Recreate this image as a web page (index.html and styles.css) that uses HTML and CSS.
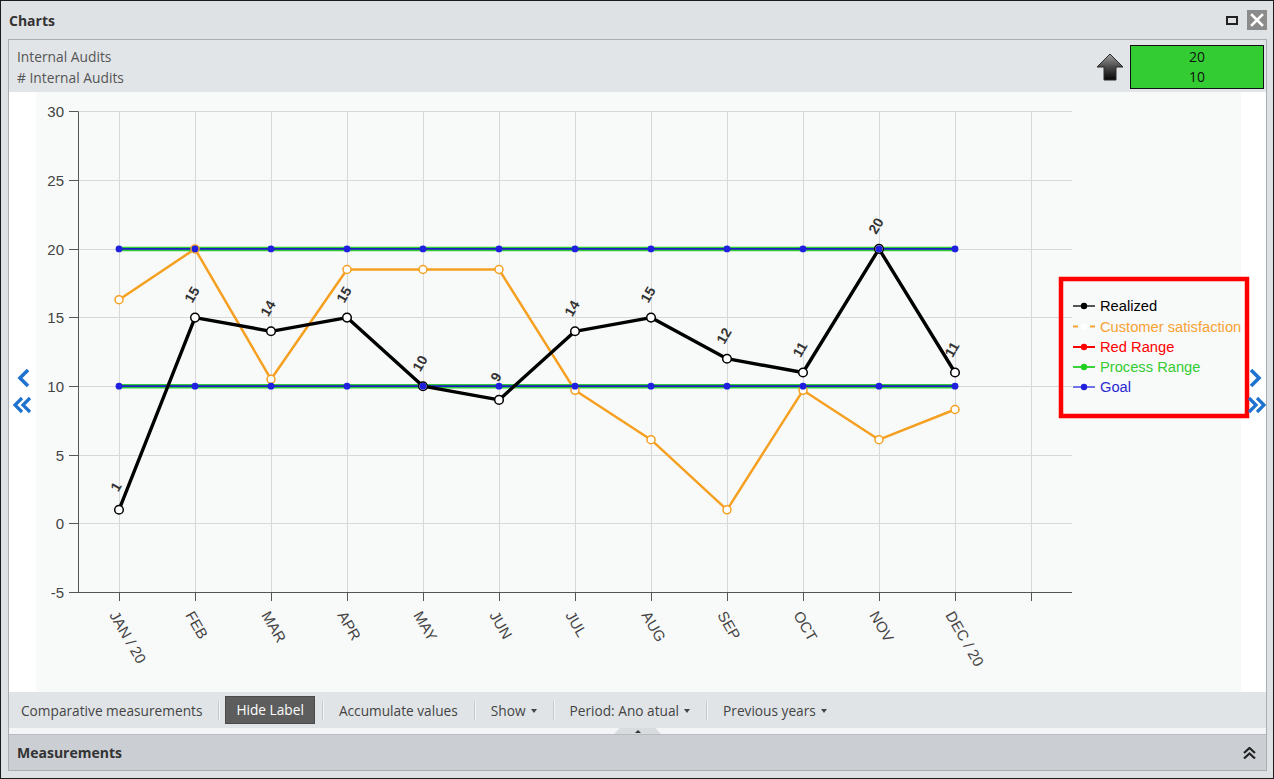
FILE: index.html
```html
<!DOCTYPE html>
<html>
<head>
<meta charset="utf-8">
<title>Charts</title>
<link rel="stylesheet" href="styles.css">
</head>
<body>
<div class="window">
  <div class="win-head">
    <span class="win-title">Charts</span>
    <div class="win-ctrls">
      <span class="restore"></span>
      <span class="close"><svg width="20" height="20" viewBox="0 0 20 20"><path d="M5 5 L15 15 M15 5 L5 15" stroke="#fff" stroke-width="2.6" stroke-linecap="square"/></svg></span>
    </div>
  </div>
  <div class="panel">
    <div class="info">
      <div class="info-text">
        <div>Internal Audits</div>
        <div># Internal Audits</div>
      </div>
      <div class="info-right">
        <svg class="trend" width="28" height="28" viewBox="0 0 28 28">
          <defs>
            <linearGradient id="ag" x1="0" y1="0" x2="0" y2="1">
              <stop offset="0" stop-color="#a0a0a0"/>
              <stop offset="0.5" stop-color="#4a4a4a"/>
              <stop offset="1" stop-color="#050505"/>
            </linearGradient>
          </defs>
          <polygon points="14,1 27,14 20,14 20,27 8,27 8,14 1,14" fill="url(#ag)" stroke="#2a2a2a" stroke-width="1"/>
        </svg>
        <div class="goal-box"><div>20</div><div>10</div></div>
      </div>
    </div>
    <div class="chart-area">
      <div class="nav">
        <svg class="nav-left" width="27" height="48" viewBox="0 0 27 48">
          <polyline points="19,2 11,10 19,18" fill="none" stroke="#1f73cf" stroke-width="3.6"/>
          <polyline points="13,30 6,37 13,44" fill="none" stroke="#1f73cf" stroke-width="3.2"/>
          <polyline points="21,30 14,37 21,44" fill="none" stroke="#1f73cf" stroke-width="3.2"/>
        </svg>
      </div>
      <div class="plot">
        <svg class="chart" width="1205" height="600" viewBox="36 92 1205 600">
          <g class="grid">
            <line x1="78" y1="111.5" x2="1072" y2="111.5"/>
            <line x1="78" y1="180.5" x2="1072" y2="180.5"/>
            <line x1="78" y1="249.5" x2="1072" y2="249.5"/>
            <line x1="78" y1="317.5" x2="1072" y2="317.5"/>
            <line x1="78" y1="386.5" x2="1072" y2="386.5"/>
            <line x1="78" y1="455.5" x2="1072" y2="455.5"/>
            <line x1="78" y1="523.5" x2="1072" y2="523.5"/>
            <line x1="119.5" y1="112" x2="119.5" y2="592"/>
            <line x1="195.5" y1="112" x2="195.5" y2="592"/>
            <line x1="271.5" y1="112" x2="271.5" y2="592"/>
            <line x1="347.5" y1="112" x2="347.5" y2="592"/>
            <line x1="423.5" y1="112" x2="423.5" y2="592"/>
            <line x1="499.5" y1="112" x2="499.5" y2="592"/>
            <line x1="575.5" y1="112" x2="575.5" y2="592"/>
            <line x1="651.5" y1="112" x2="651.5" y2="592"/>
            <line x1="727.5" y1="112" x2="727.5" y2="592"/>
            <line x1="803.5" y1="112" x2="803.5" y2="592"/>
            <line x1="879.5" y1="112" x2="879.5" y2="592"/>
            <line x1="955.5" y1="112" x2="955.5" y2="592"/>
            <line x1="1031.5" y1="112" x2="1031.5" y2="592"/>
          </g>
          <g class="axis">
            <line x1="78.5" y1="111.5" x2="78.5" y2="592.5"/>
            <line x1="78" y1="592.5" x2="1072" y2="592.5"/>
            <line x1="69" y1="111.5" x2="78" y2="111.5"/>
            <line x1="69" y1="180.5" x2="78" y2="180.5"/>
            <line x1="69" y1="249.5" x2="78" y2="249.5"/>
            <line x1="69" y1="317.5" x2="78" y2="317.5"/>
            <line x1="69" y1="386.5" x2="78" y2="386.5"/>
            <line x1="69" y1="455.5" x2="78" y2="455.5"/>
            <line x1="69" y1="523.5" x2="78" y2="523.5"/>
            <line x1="69" y1="592.5" x2="78" y2="592.5"/>
            <line x1="119.5" y1="592" x2="119.5" y2="601"/>
            <line x1="195.5" y1="592" x2="195.5" y2="601"/>
            <line x1="271.5" y1="592" x2="271.5" y2="601"/>
            <line x1="347.5" y1="592" x2="347.5" y2="601"/>
            <line x1="423.5" y1="592" x2="423.5" y2="601"/>
            <line x1="499.5" y1="592" x2="499.5" y2="601"/>
            <line x1="575.5" y1="592" x2="575.5" y2="601"/>
            <line x1="651.5" y1="592" x2="651.5" y2="601"/>
            <line x1="727.5" y1="592" x2="727.5" y2="601"/>
            <line x1="803.5" y1="592" x2="803.5" y2="601"/>
            <line x1="879.5" y1="592" x2="879.5" y2="601"/>
            <line x1="955.5" y1="592" x2="955.5" y2="601"/>
            <line x1="1031.5" y1="592" x2="1031.5" y2="601"/>
          </g>
          <g class="ylabels">
            <text x="64" y="116.5">30</text>
            <text x="64" y="185.5">25</text>
            <text x="64" y="254.5">20</text>
            <text x="64" y="322.5">15</text>
            <text x="64" y="391.5">10</text>
            <text x="64" y="460.5">5</text>
            <text x="64" y="528.5">0</text>
            <text x="64" y="597.5">-5</text>
          </g>
          <g class="xlabels">
            <text transform="translate(109,615) rotate(60)">JAN / 20</text>
            <text transform="translate(185,615) rotate(60)">FEB</text>
            <text transform="translate(261,615) rotate(60)">MAR</text>
            <text transform="translate(337,615) rotate(60)">APR</text>
            <text transform="translate(413,615) rotate(60)">MAY</text>
            <text transform="translate(489,615) rotate(60)">JUN</text>
            <text transform="translate(565,615) rotate(60)">JUL</text>
            <text transform="translate(641,615) rotate(60)">AUG</text>
            <text transform="translate(717,615) rotate(60)">SEP</text>
            <text transform="translate(793,615) rotate(60)">OCT</text>
            <text transform="translate(869,615) rotate(60)">NOV</text>
            <text transform="translate(945,615) rotate(60)">DEC / 20</text>
          </g>
          <polyline class="s-orange" points="119,299.7 195,248.9 271,379.3 347,269.5 423,269.5 499,269.5 575,390.3 651,439.7 727,509.8 803,390.3 879,439.7 955,409.5"/>
          <line class="s-green" x1="119" y1="248.9" x2="955" y2="248.9"/>
          <line class="s-green" x1="119" y1="386.2" x2="955" y2="386.2"/>
          <line class="s-blue" x1="119" y1="248.9" x2="955" y2="248.9"/>
          <line class="s-blue" x1="119" y1="386.2" x2="955" y2="386.2"/>
          <polyline class="s-black" points="119,509.8 195,317.6 271,331.3 347,317.6 423,386.2 499,399.9 575,331.3 651,317.6 727,358.7 803,372.5 879,248.9 955,372.5"/>
          <g class="m-orange">
            <circle cx="119" cy="299.7" r="4"/>
            <circle cx="195" cy="248.9" r="4"/>
            <circle cx="271" cy="379.3" r="4"/>
            <circle cx="347" cy="269.5" r="4"/>
            <circle cx="423" cy="269.5" r="4"/>
            <circle cx="499" cy="269.5" r="4"/>
            <circle cx="575" cy="390.3" r="4"/>
            <circle cx="651" cy="439.7" r="4"/>
            <circle cx="727" cy="509.8" r="4"/>
            <circle cx="803" cy="390.3" r="4"/>
            <circle cx="879" cy="439.7" r="4"/>
            <circle cx="955" cy="409.5" r="4"/>
          </g>
          <g class="m-black">
            <circle cx="119" cy="509.8" r="4.3"/>
            <circle cx="195" cy="317.6" r="4.3"/>
            <circle cx="271" cy="331.3" r="4.3"/>
            <circle cx="347" cy="317.6" r="4.3"/>
            <circle cx="423" cy="386.2" r="4.3"/>
            <circle cx="499" cy="399.9" r="4.3"/>
            <circle cx="575" cy="331.3" r="4.3"/>
            <circle cx="651" cy="317.6" r="4.3"/>
            <circle cx="727" cy="358.7" r="4.3"/>
            <circle cx="803" cy="372.5" r="4.3"/>
            <circle cx="879" cy="248.9" r="4.3"/>
            <circle cx="955" cy="372.5" r="4.3"/>
          </g>
          <g class="m-blue">
            <circle cx="119" cy="248.9" r="3.4"/>
            <circle cx="195" cy="248.9" r="3.4"/>
            <circle cx="271" cy="248.9" r="3.4"/>
            <circle cx="347" cy="248.9" r="3.4"/>
            <circle cx="423" cy="248.9" r="3.4"/>
            <circle cx="499" cy="248.9" r="3.4"/>
            <circle cx="575" cy="248.9" r="3.4"/>
            <circle cx="651" cy="248.9" r="3.4"/>
            <circle cx="727" cy="248.9" r="3.4"/>
            <circle cx="803" cy="248.9" r="3.4"/>
            <circle cx="879" cy="248.9" r="3.4"/>
            <circle cx="955" cy="248.9" r="3.4"/>
            <circle cx="119" cy="386.2" r="3.4"/>
            <circle cx="195" cy="386.2" r="3.4"/>
            <circle cx="271" cy="386.2" r="3.4"/>
            <circle cx="347" cy="386.2" r="3.4"/>
            <circle cx="423" cy="386.2" r="3.4"/>
            <circle cx="499" cy="386.2" r="3.4"/>
            <circle cx="575" cy="386.2" r="3.4"/>
            <circle cx="651" cy="386.2" r="3.4"/>
            <circle cx="727" cy="386.2" r="3.4"/>
            <circle cx="803" cy="386.2" r="3.4"/>
            <circle cx="879" cy="386.2" r="3.4"/>
            <circle cx="955" cy="386.2" r="3.4"/>
          </g>
          <g class="dlabels">
            <text transform="translate(116,486.8) rotate(-60)" dy="0.35em">1</text>
            <text transform="translate(192,294.6) rotate(-60)" dy="0.35em">15</text>
            <text transform="translate(268,308.3) rotate(-60)" dy="0.35em">14</text>
            <text transform="translate(344,294.6) rotate(-60)" dy="0.35em">15</text>
            <text transform="translate(420,363.2) rotate(-60)" dy="0.35em">10</text>
            <text transform="translate(496,376.9) rotate(-60)" dy="0.35em">9</text>
            <text transform="translate(572,308.3) rotate(-60)" dy="0.35em">14</text>
            <text transform="translate(648,294.6) rotate(-60)" dy="0.35em">15</text>
            <text transform="translate(724,335.7) rotate(-60)" dy="0.35em">12</text>
            <text transform="translate(800,349.5) rotate(-60)" dy="0.35em">11</text>
            <text transform="translate(876,225.9) rotate(-60)" dy="0.35em">20</text>
            <text transform="translate(952,349.5) rotate(-60)" dy="0.35em">11</text>
          </g>
          <g class="legend">
            <rect class="lg-box" x="1061" y="279" width="186" height="137"/>
            <line x1="1073" y1="306" x2="1095" y2="306" stroke="#555" stroke-width="2"/>
            <circle cx="1084" cy="306" r="3.2" fill="#000"/>
            <text x="1100" y="311" fill="#000">Realized</text>
            <line x1="1073" y1="326.5" x2="1078" y2="326.5" stroke="#f7a233" stroke-width="2"/>
            <line x1="1090" y1="326.5" x2="1095" y2="326.5" stroke="#f7a233" stroke-width="2"/>
            <circle cx="1084" cy="326.5" r="3.2" fill="#fff"/>
            <text x="1100" y="331.5" fill="#f7a233">Customer satisfaction</text>
            <line x1="1073" y1="347" x2="1095" y2="347" stroke="#ff0000" stroke-width="2"/>
            <circle cx="1084" cy="347" r="3.2" fill="#ff0000"/>
            <text x="1100" y="352" fill="#ff0000">Red Range</text>
            <line x1="1073" y1="367" x2="1095" y2="367" stroke="#3ad23a" stroke-width="2"/>
            <circle cx="1084" cy="367" r="3.2" fill="#1fd01f"/>
            <text x="1100" y="372" fill="#33cc33">Process Range</text>
            <line x1="1073" y1="387" x2="1095" y2="387" stroke="#7272ea" stroke-width="2"/>
            <circle cx="1084" cy="387" r="3.2" fill="#1f1fdd"/>
            <text x="1100" y="392" fill="#2b2bd0">Goal</text>
          </g>
        </svg>
      </div>
      <div class="nav">
        <svg class="nav-right" width="25" height="48" viewBox="0 0 25 48">
          <polyline points="10,2 18,10 10,18" fill="none" stroke="#1f73cf" stroke-width="3.6"/>
          <polyline points="8,30 15,37 8,44" fill="none" stroke="#1f73cf" stroke-width="3.2"/>
          <polyline points="16,30 23,37 16,44" fill="none" stroke="#1f73cf" stroke-width="3.2"/>
        </svg>
      </div>
    </div>
    <div class="toolbar">
      <span class="tb-item first">Comparative measurements</span>
      <span class="tb-sep"></span>
      <span class="tb-btn">Hide Label</span>
      <span class="tb-sep"></span>
      <span class="tb-item">Accumulate values</span>
      <span class="tb-sep"></span>
      <span class="tb-item">Show<span class="caret"></span></span>
      <span class="tb-sep"></span>
      <span class="tb-item">Period: Ano atual<span class="caret"></span></span>
      <span class="tb-sep"></span>
      <span class="tb-item">Previous years<span class="caret"></span></span>
    </div>
    <div class="strip"><span class="tab"><span class="tab-caret"></span></span></div>
    <div class="measure">
      <span class="measure-title">Measurements</span>
      <svg class="collapse" width="13" height="12" viewBox="0 0 13 12">
        <polyline points="1,6 6.5,1 12,6" fill="none" stroke="#222" stroke-width="2.2"/>
        <polyline points="1,11.5 6.5,6.5 12,11.5" fill="none" stroke="#222" stroke-width="2.2"/>
      </svg>
    </div>
  </div>
</div>
</body>
</html>
```

FILE: styles.css
```css
* { box-sizing: border-box; }
html, body { margin: 0; padding: 0; }
body {
  width: 1274px;
  height: 779px;
  overflow: hidden;
  font-family: "Open Sans", "Liberation Sans", sans-serif;
  font-size: 14px;
  color: #444;
  background: #fff;
}
.window {
  width: 1274px;
  height: 779px;
  border: 1px solid #1c1c1c;
  background: #dfe2e5;
  padding: 0 6px 7px 7px;
  display: flex;
  flex-direction: column;
}
.win-head {
  height: 38px;
  display: flex;
  align-items: center;
  justify-content: space-between;
  padding-left: 1px;
}
.win-title {
  font-weight: 700;
  font-size: 14px;
  color: #333;
}
.win-ctrls {
  display: flex;
  align-items: center;
}
.restore {
  width: 12px;
  height: 9px;
  border: 2px solid #222;
  margin-right: 9px;
  margin-top: 1px;
}
.close {
  width: 20px;
  height: 20px;
  background: #8b8b8b;
  display: block;
}
.close svg { display: block; }
.panel {
  flex: 1;
  border: 1px solid #a9aeb3;
  display: flex;
  flex-direction: column;
  background: #fff;
}
.info {
  height: 52px;
  background: #e2e5e8;
  display: flex;
  justify-content: space-between;
  padding: 6px 2px 0 8px;
}
.info-text {
  line-height: 21px;
  color: #555;
  font-size: 13.8px;
}
.info-right {
  display: flex;
  align-items: flex-start;
}
.trend {
  display: block;
  margin-top: 7px;
  margin-right: 6px;
}
.goal-box {
  width: 134px;
  height: 44px;
  margin-top: -1px;
  border: 1px solid #111;
  background: #33cc33;
  color: #111;
  text-align: center;
  line-height: 20px;
  padding-top: 1px;
  font-size: 14px;
}
.chart-area {
  height: 600px;
  display: flex;
  background: #fff;
}
.nav {
  width: 27px;
  padding-top: 276px;
}
.nav:last-child { width: 25px; }
.nav svg { display: block; overflow: visible; }
.plot {
  width: 1205px;
  background: #f8f9f9;
}
.chart {
  display: block;
  overflow: visible;
  font-family: "Liberation Sans", Arial, sans-serif;
}
.grid line { stroke: #d8d8d8; stroke-width: 1; }
.axis line { stroke: #555; stroke-width: 1; }
.ylabels text { font-size: 15px; fill: #444; text-anchor: end; }
.xlabels text { font-size: 15px; fill: #444; }
.s-orange { fill: none; stroke: #f5a021; stroke-width: 2.5; stroke-linejoin: round; }
.s-green { stroke: #30c93a; stroke-width: 4.5; }
.s-blue { stroke: #1d1dc4; stroke-width: 1.8; }
.s-black { fill: none; stroke: #000; stroke-width: 3.4; stroke-linejoin: round; }
.m-orange circle { fill: #fff; stroke: #f5a021; stroke-width: 1.5; }
.m-black circle { fill: #fff; stroke: #000; stroke-width: 1.5; }
.m-blue circle { fill: #1f1fe0; }
.dlabels text { font-size: 14px; font-weight: 700; fill: #333; text-anchor: middle; }
.legend text { font-size: 14.7px; }
.lg-box { fill: none; stroke: #ff0000; stroke-width: 4.5; }
.toolbar {
  height: 36px;
  background: #e1e4e7;
  display: flex;
  align-items: center;
  color: #444;
  font-size: 13.7px;
  white-space: nowrap;
}
.tb-item {
  padding: 0 16px;
  display: flex;
  align-items: center;
}
.tb-item.first { padding-left: 12px; padding-right: 16px; }
.tb-sep {
  width: 1px;
  height: 19px;
  background: #c6cacd;
  box-shadow: 1px 0 0 #f2f3f4;
}
.tb-btn {
  height: 28px;
  line-height: 26px;
  margin: 0 7px 0 6px;
  padding: 0 10px;
  background: #5d5d5d;
  border: 1px solid #4a4a4a;
  color: #fff;
}
.caret {
  display: inline-block;
  width: 0;
  height: 0;
  margin-left: 5px;
  margin-top: 1px;
  border-left: 3.5px solid transparent;
  border-right: 3.5px solid transparent;
  border-top: 4px solid #444;
}
.strip {
  height: 6px;
  background: #f4f5f6;
  display: flex;
  justify-content: center;
}
.tab {
  width: 47px;
  height: 6px;
  background: #d9dcdf;
  clip-path: polygon(12% 0, 88% 0, 100% 100%, 0 100%);
  display: flex;
  justify-content: center;
  align-items: center;
}
.tab-caret {
  width: 0;
  height: 0;
  border-left: 3px solid transparent;
  border-right: 3px solid transparent;
  border-bottom: 3px solid #333;
}
.measure {
  height: 36px;
  background: #cbcfd3;
  border-top: 1px solid #b8bcc0;
  display: flex;
  align-items: center;
  justify-content: space-between;
  padding: 0 10px 0 8px;
}
.measure-title {
  font-weight: 700;
  color: #333;
}
.collapse { display: block; }
```
